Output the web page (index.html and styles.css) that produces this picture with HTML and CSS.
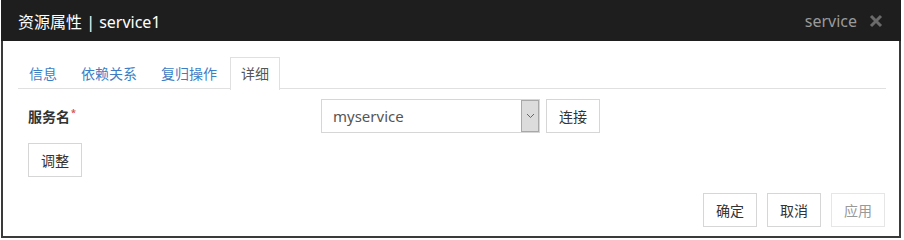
FILE: index.html
```html
<!DOCTYPE html>
<html lang="zh">
<head>
  <meta charset="UTF-8">
  <title>资源属性</title>
  <link rel="stylesheet" href="styles.css">
</head>
<body>
  <div class="dialog">
    <div class="dialog-header">
      <span class="dialog-title">资源属性 | service1</span>
      <span class="dialog-type">service</span>
      <span class="dialog-close">
        <svg width="14" height="14" viewBox="0 0 14 14"><path d="M2 2L12 12M12 2L2 12" stroke="#6a6a6a" stroke-width="3"/></svg>
      </span>
    </div>

    <div class="dialog-body">
      <ul class="tabs">
        <li class="tab">信息</li>
        <li class="tab">依赖关系</li>
        <li class="tab">复归操作</li>
        <li class="tab active">详细</li>
      </ul>

      <div class="tab-content">
        <div class="form-row">
          <label class="form-label">服务名<sup class="req">*</sup></label>
          <div class="select-box">
            <span class="select-value">myservice</span>
            <span class="select-arrow">
              <svg width="9" height="6" viewBox="0 0 9 6"><path d="M1 1L4.5 4.5L8 1" stroke="#666" stroke-width="1" fill="none"/></svg>
            </span>
          </div>
          <button class="btn btn-connect">连接</button>
        </div>
        <button class="btn">调整</button>
      </div>

      <div class="dialog-footer">
        <button class="btn">确定</button>
        <button class="btn">取消</button>
        <button class="btn" disabled>应用</button>
      </div>
    </div>
  </div>
</body>
</html>
```

FILE: styles.css
```css
body {
  margin: 0;
  padding: 0 0 0 1px;
  font-family: "Noto Sans", "Noto Sans CJK SC", sans-serif;
  color: #333;
  background: #fff;
}

.dialog {
  width: 900px;
  height: 238px;
  box-sizing: border-box;
  border: 2px solid #3a3a3a;
  border-top: none;
  display: flex;
  flex-direction: column;
}

.dialog-header {
  height: 41px;
  margin: 0 -2px;
  background: #1e1e1e;
  display: flex;
  align-items: center;
  padding: 0 18px 0 17px;
}

.dialog-title {
  color: #fff;
  font-size: 16px;
  flex: 1;
}

.dialog-type {
  color: #9a9a9a;
  font-size: 16px;
  margin-right: 12px;
}

.dialog-close {
  display: flex;
}

.dialog-body {
  flex: 1;
  padding: 16px 13px 0 15px;
  display: flex;
  flex-direction: column;
}

.tabs {
  list-style: none;
  margin: 0;
  padding: 0;
  display: flex;
  border-bottom: 1px solid #e0e0e0;
  height: 31px;
}

.tab {
  padding: 0 10px;
  margin-right: 2px;
  font-size: 14px;
  line-height: 31px;
  color: #3b7ec6;
  border: 1px solid transparent;
  border-bottom: none;
}

.tab.active {
  color: #555;
  border-color: #e0e0e0;
  background: #fff;
  height: 32px;
  line-height: 31px;
}

.tab-content {
  padding: 10px 10px 0;
  flex: 1;
}

.form-row {
  display: flex;
  align-items: center;
  margin-bottom: 10px;
}

.form-label {
  width: 293px;
  font-size: 14px;
  font-weight: bold;
  color: #333;
}

.req {
  color: #d9534f;
  font-size: 9px;
  margin-left: 1px;
}

.select-box {
  width: 219px;
  height: 34px;
  box-sizing: border-box;
  border: 1px solid #d6d6d6;
  display: flex;
  align-items: stretch;
}

.select-value {
  flex: 1;
  font-size: 15px;
  color: #555;
  padding-left: 11px;
  line-height: 32px;
}

.select-arrow {
  width: 16px;
  background: #dcdcdc;
  border: 1px solid #a8a8a8;
  display: flex;
  align-items: center;
  justify-content: center;
}

.btn {
  width: 54px;
  height: 34px;
  box-sizing: border-box;
  border: 1px solid #d6d6d6;
  background: #fff;
  font-family: "Noto Sans CJK SC", sans-serif;
  font-size: 14px;
  color: #333;
  padding: 0;
}

.btn-connect {
  margin-left: 6px;
}

.btn:disabled {
  color: #999;
  border-color: #e6e6e6;
}

.dialog-footer {
  display: flex;
  justify-content: flex-end;
  gap: 10px;
  padding: 0 1px 9px 0;
}
```
